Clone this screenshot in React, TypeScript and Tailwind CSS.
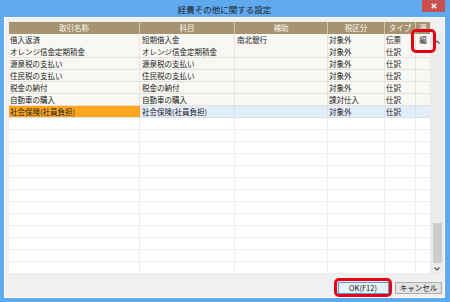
import React from "react";

interface Row {
  name: string;
  account: string;
  sub: string;
  tax: string;
  type: string;
  edit: string;
}

const rows: Row[] = [
  { name: "借入返済", account: "短期借入金", sub: "南北銀行", tax: "対象外", type: "伝票", edit: "編" },
  { name: "オレンジ信金定期積金", account: "オレンジ信金定期積金", sub: "", tax: "対象外", type: "仕訳", edit: "" },
  { name: "源泉税の支払い", account: "源泉税の支払い", sub: "", tax: "対象外", type: "仕訳", edit: "" },
  { name: "住民税の支払い", account: "住民税の支払い", sub: "", tax: "対象外", type: "仕訳", edit: "" },
  { name: "税金の納付", account: "税金の納付", sub: "", tax: "対象外", type: "仕訳", edit: "" },
  { name: "自動車の購入", account: "自動車の購入", sub: "", tax: "課対仕入", type: "仕訳", edit: "" },
  { name: "社会保険(社員負担)", account: "社会保険(社員負担)", sub: "", tax: "対象外", type: "仕訳", edit: "" },
];

const EMPTY_ROWS = 13;
const cols = "grid grid-cols-[131px_95px_93px_57px_31px_14px]";

function Chevron({ up }: { up?: boolean }) {
  return (
    <svg width="6" height="4" viewBox="0 0 6 4">
      <path
        d={up ? "M0.5 3.5 L3 1 L5.5 3.5" : "M0.5 0.5 L3 3 L5.5 0.5"}
        fill="none"
        stroke="#555"
        strokeWidth="1.2"
      />
    </svg>
  );
}

export default function App() {
  return (
    <div className="relative w-[450px] h-[302px] bg-[#5fa9ee] flex flex-col pl-[4px] pr-[5px] pb-[5px] font-['Noto_Sans_CJK_JP','Noto_Sans',sans-serif] text-[#222]">
      {/* title bar */}
      <div className="h-[17px] grid grid-cols-[1fr_auto_1fr]">
        <div />
        <div className="text-[8.5px] leading-[18px] text-[#1e1e1e]">経費その他に関する設定</div>
        <div className="flex justify-end">
          <div className="w-[23px] h-[12px] bg-[#c9504e] flex items-center justify-center">
            <svg width="6" height="6" viewBox="0 0 6 6">
              <path d="M0.7 0.7 L5.3 5.3 M5.3 0.7 L0.7 5.3" stroke="#fff" strokeWidth="1.4" />
            </svg>
          </div>
        </div>
      </div>

      {/* body */}
      <div className="flex-1 border border-white bg-[#f0f0f0] flex flex-col">
        <div className="flex pt-[4px] pl-[4px]">
          <div className="w-[421px] bg-white text-[7.5px] leading-[12px]">
            <div className={`${cols} h-[12px] bg-[#a69470] text-[#fbf8ef]`}>
              {["取引名称", "科目", "補助", "税区分", "タイプ", "適"].map((h, i) => (
                <div
                  key={h}
                  className={`text-center overflow-hidden whitespace-nowrap ${i < 5 ? "border-r border-[#cfc4a8]" : ""}`}
                >
                  {h}
                </div>
              ))}
            </div>
            {rows.map((r, idx) => {
              const sel = idx === rows.length - 1;
              const cell = sel
                ? "bg-[#e3edf9] border-r border-[#d9e3ef]"
                : "bg-[#f8f7f3] border-r border-[#e6e4de]";
              return (
                <div
                  key={idx}
                  className={`${cols} h-[12px] border-b ${sel ? "border-[#d5e0ee]" : "border-[#e3e1db]"}`}
                >
                  <div className={`pl-[1px] whitespace-nowrap overflow-hidden ${sel ? "bg-[#ffa61c] border-r border-[#f0a030]" : cell}`}>
                    {r.name}
                  </div>
                  <div className={`pl-[2px] whitespace-nowrap overflow-hidden ${cell}`}>{r.account}</div>
                  <div className={`pl-[2px] whitespace-nowrap overflow-hidden ${cell}`}>{r.sub}</div>
                  <div className={`pl-[1px] whitespace-nowrap overflow-hidden ${cell}`}>{r.tax}</div>
                  <div className={`pl-[1px] whitespace-nowrap overflow-hidden ${cell}`}>{r.type}</div>
                  <div className={`text-center ${sel ? "bg-[#e3edf9]" : "bg-[#f8f7f3]"}`}>{r.edit}</div>
                </div>
              );
            })}
            {Array.from({ length: EMPTY_ROWS }).map((_, i) => (
              <div key={`e${i}`} className={`${cols} h-[12px] border-b border-[#eeeeee]`}>
                <div className="border-r border-[#eeeeee]" />
                <div className="border-r border-[#eeeeee]" />
                <div className="border-r border-[#eeeeee]" />
                <div className="border-r border-[#eeeeee]" />
                <div className="border-r border-[#eeeeee]" />
                <div />
              </div>
            ))}
          </div>

          {/* scrollbar */}
          <div className="w-[14px] h-[240px] mt-[12px] bg-[#ebebeb] flex flex-col items-center">
            <div className="h-[16px] flex items-center justify-center">
              <Chevron up />
            </div>
            <div className="flex-1" />
            <div className="w-[9px] h-[40px] bg-[#cdcdcd]" />
            <div className="h-[11px] flex items-center justify-center">
              <Chevron />
            </div>
          </div>
        </div>

        {/* buttons */}
        <div className="flex justify-end items-start pt-[4px] pr-[2px] text-[7.5px] leading-[10px] text-[#111]">
          <div className="w-[58px] h-[19px] border-[3px] border-[#e60016] rounded-[5px] flex items-center justify-center">
            <div className="w-[51px] h-[12px] border border-[#5b9bd8] bg-[#e8f0f8] flex items-center justify-center">
              OK(F12)
            </div>
          </div>
          <div className="ml-[3px] mt-[4px] w-[47px] h-[12px] border border-[#adadad] bg-[#e3e3e3] flex items-center justify-center">
            キャンセル
          </div>
        </div>
      </div>

      {/* annotation around 編 */}
      <div className="absolute left-[411px] top-[29px] w-[25px] h-[24px] border-[3px] border-[#e60016] rounded-[5px]" />
    </div>
  );
}
